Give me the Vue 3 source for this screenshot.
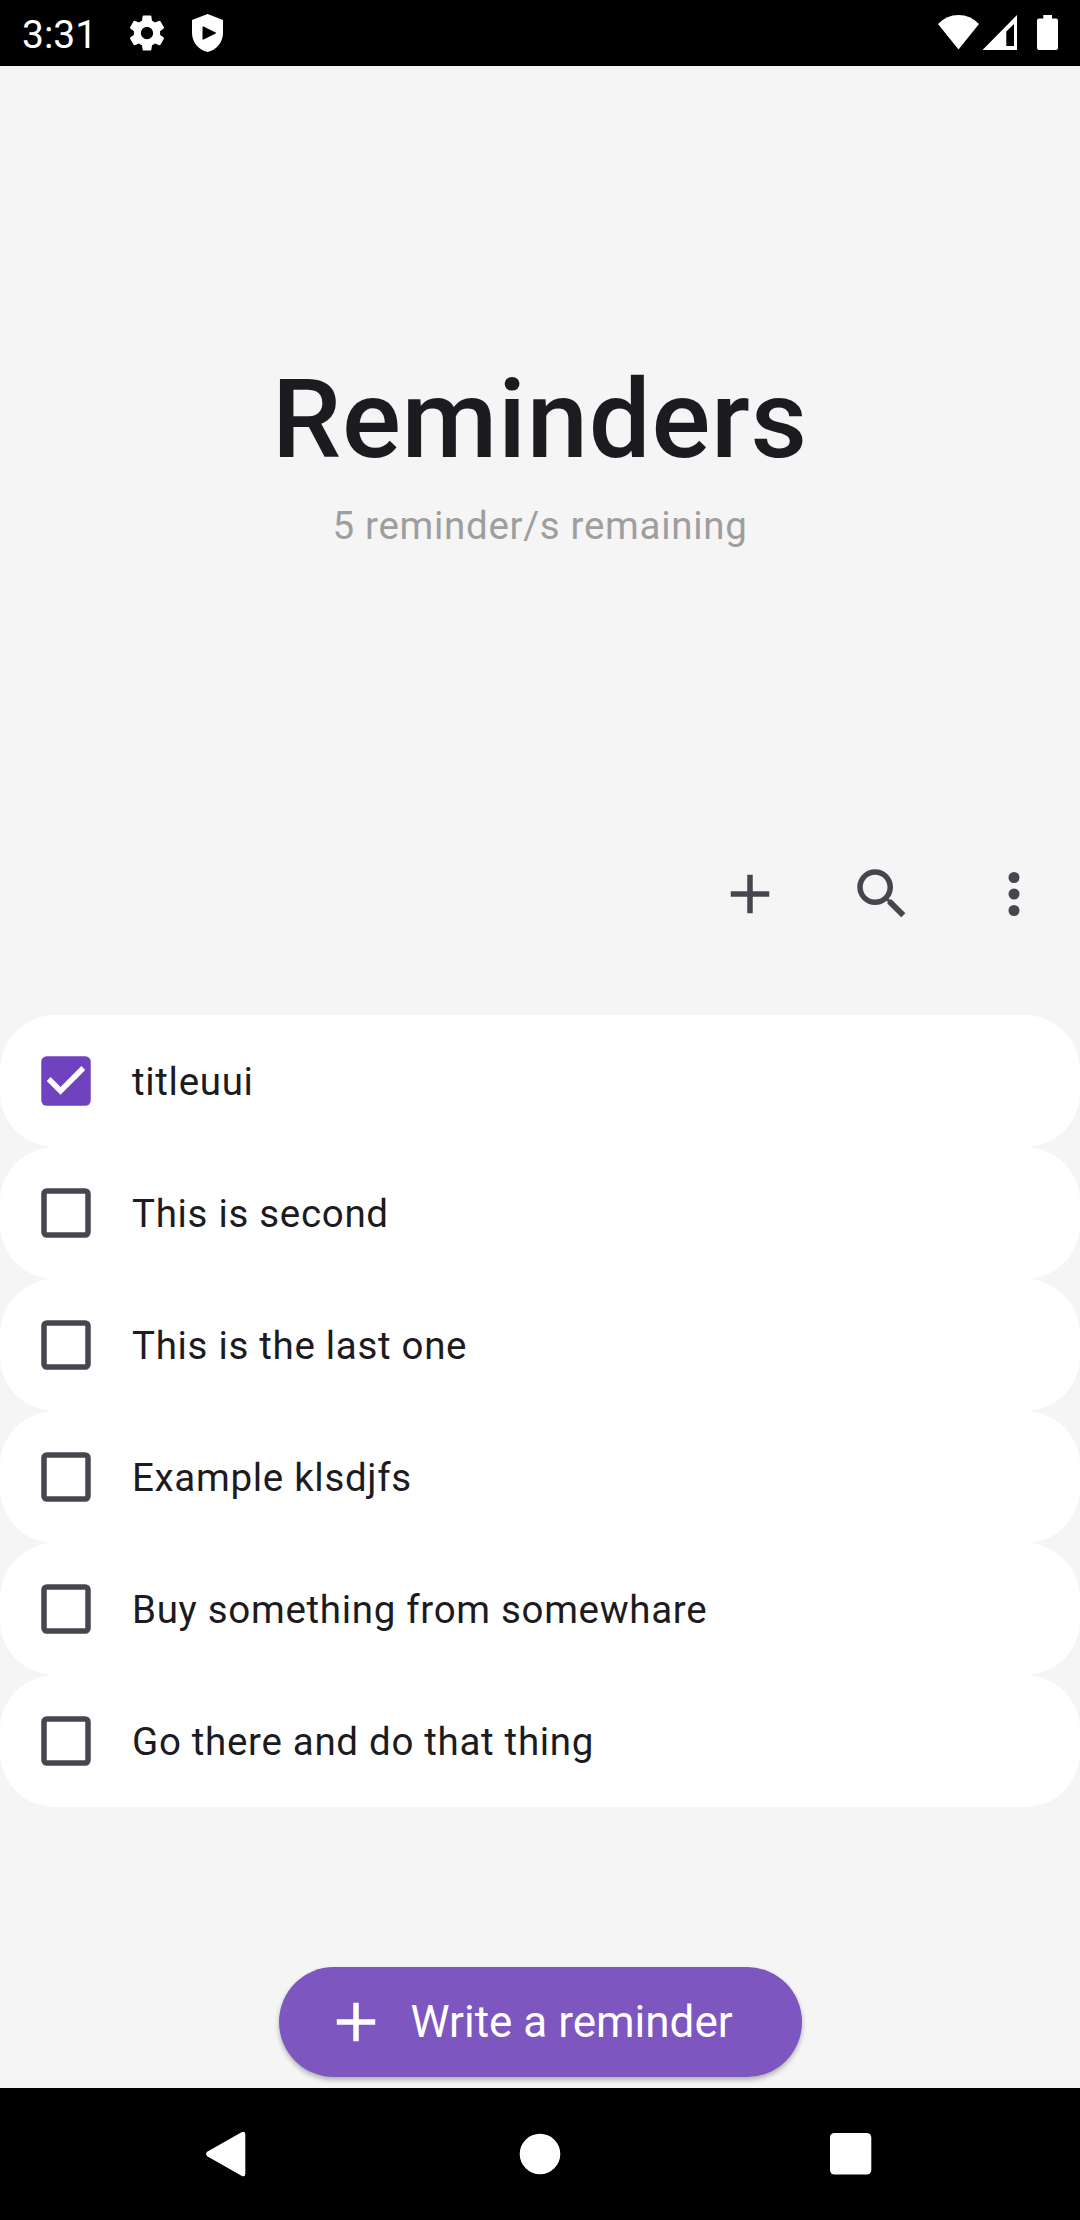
<script setup>
import { ref, computed } from 'vue'

const reminders = ref([
  { title: 'titleuui', done: true },
  { title: 'This is second', done: false },
  { title: 'This is the last one', done: false },
  { title: 'Example klsdjfs', done: false },
  { title: 'Buy something from somewhare', done: false },
  { title: 'Go there and do that thing', done: false }
])

const remaining = computed(() => reminders.value.filter((r) => !r.done).length)
</script>

<template>
  <div class="screen">
    <header class="status">
      <span class="clock">3:31</span>
      <svg class="gear" viewBox="0 0 24 24" width="42" height="42">
        <path d="M19.43 12.98c.04-.32.07-.64.07-.98s-.03-.66-.07-.98l2.11-1.65c.19-.15.24-.42.12-.64l-2-3.46c-.12-.22-.39-.3-.61-.22l-2.49 1c-.52-.4-1.08-.73-1.69-.98l-.38-2.65C14.46 2.18 14.25 2 14 2h-4c-.25 0-.46.18-.49.42l-.38 2.65c-.61.25-1.17.59-1.69.98l-2.49-1c-.23-.09-.49 0-.61.22l-2 3.46c-.13.22-.07.49.12.64l2.11 1.65c-.04.32-.07.65-.07.98s.03.66.07.98l-2.11 1.65c-.19.15-.24.42-.12.64l2 3.46c.12.22.39.3.61.22l2.49-1c.52.4 1.08.73 1.69.98l.38 2.65c.03.24.24.42.49.42h4c.25 0 .46-.18.49-.42l.38-2.65c.61-.25 1.17-.59 1.69-.98l2.49 1c.23.09.49 0 .61-.22l2-3.46c.12-.22.07-.49-.12-.64l-2.11-1.65zM12 15.5c-1.93 0-3.5-1.57-3.5-3.5s1.57-3.5 3.5-3.5 3.5 1.57 3.5 3.5-1.57 3.5-3.5 3.5z" />
      </svg>
      <svg class="shield" viewBox="0 0 32 38" width="32" height="38">
        <path fill-rule="evenodd" d="M15.6 0L31 6V19C31 28 24.5 36 15.6 38C6.500 36 0 28 0 19V6ZM11.500 12.500Q10.500 12 10.500 13V25Q10.500 26 11.500 25.500L23.700 19.600Q24.500 19 23.700 18.400Z" />
      </svg>
      <svg class="signals" viewBox="0 0 124 38" width="124" height="38">
        <path d="M0 10Q8.500 1 20.500 1T41 10L20.500 35.500Z" />
        <path fill-rule="evenodd" d="M79 1V36H44.500ZM76 10L68.300 17.500V32H76Z" />
        <path d="M105.300 1H114V4.500H118Q120 4.500 120 6.500V34Q120 36 118 36H101Q99 36 99 34V6.500Q99 4.500 101 4.500H105.300Z" />
      </svg>
    </header>

    <main class="content">
      <section class="hero">
        <h1>Reminders</h1>
        <p>{{ remaining }} reminder/s remaining</p>
      </section>

      <nav class="toolbar">
        <button class="tool" aria-label="Add">
          <svg viewBox="0 0 24 24"><path d="M19 13h-6v6h-2v-6H5v-2h6V5h2v6h6z" /></svg>
        </button>
        <button class="tool" aria-label="Search">
          <svg viewBox="0 0 24 24"><path d="M15.500 14h-.79l-.28-.27A6.471 6.471 0 0 0 16 9.500 6.500 6.500 0 1 0 9.500 16c1.610 0 3.090-.59 4.230-1.570l.27.28v.79l5 4.990L20.490 19l-4.990-5zm-6 0C7.010 14 5 11.990 5 9.500S7.010 5 9.500 5 14 7.010 14 9.500 11.990 14 9.500 14z" /></svg>
        </button>
        <button class="tool" aria-label="More options">
          <svg viewBox="0 0 24 24"><circle cx="12" cy="6" r="2" /><circle cx="12" cy="12" r="2" /><circle cx="12" cy="18" r="2" /></svg>
        </button>
      </nav>

      <ul class="list">
        <li v-for="item in reminders" :key="item.title" class="row" @click="item.done = !item.done">
          <svg class="check" viewBox="0 0 24 24">
            <template v-if="item.done">
              <rect x="3" y="3" width="18" height="18" rx="2" fill="#6f43c0" />
              <path fill="#fff" d="M10 17l-5-5 1.410-1.410L10 14.170l7.590-7.590L19 8z" />
            </template>
            <rect v-else x="4" y="4" width="16" height="16" rx="1" fill="none" stroke="#49454f" stroke-width="2" />
          </svg>
          <span class="label">{{ item.title }}</span>
        </li>
      </ul>

      <div class="action">
        <button class="fab">
          <svg viewBox="0 0 24 24" width="66" height="66"><path d="M19 13h-6v6h-2v-6H5v-2h6V5h2v6h6z" /></svg>
          <span>Write a reminder</span>
        </button>
      </div>
    </main>

    <footer class="navbar">
      <svg viewBox="0 0 40 46" width="40" height="46"><path d="M1.200 20.800L35.500 1.200Q39.300 -.5 39.300 3.500V42.500Q39.300 46.500 35.500 44.800L1.200 25.200Q-1 23 1.200 20.800Z" /></svg>
      <svg viewBox="0 0 42 42" width="42" height="42"><circle cx="21" cy="21" r="20.300" /></svg>
      <svg viewBox="0 0 42 42" width="42" height="42"><rect width="41.300" height="41.500" rx="4.500" /></svg>
    </footer>
  </div>
</template>

<style>
body {
  margin: 0;
}
</style>

<style scoped>
.screen {
  display: flex;
  flex-direction: column;
  width: 1080px;
  height: 2220px;
  overflow: hidden;
  background: #f5f5f5;
  color: #1c1b1f;
  font-family: Roboto, sans-serif;
}
svg {
  display: block;
  flex: none;
}
button {
  border: 0;
  padding: 0;
  background: none;
  font: inherit;
}
.status {
  display: flex;
  align-items: center;
  flex: none;
  box-sizing: border-box;
  height: 66px;
  padding-left: 22px;
  padding-right: 18px;
  background: #000;
  color: #fff;
  fill: #fff;
}
.clock {
  width: 104px;
  font-size: 39px;
  line-height: 46px;
  padding-top: 3px;
}
.shield {
  margin-left: 24px;
}
.signals {
  margin-left: auto;
}
.content {
  display: flex;
  flex-direction: column;
  flex: 1;
}
.hero {
  height: 762px;
  text-align: center;
}
h1 {
  margin: 0;
  padding-top: 289px;
  font-size: 110px;
  line-height: 129px;
  font-weight: 500;
  letter-spacing: 0.6875px;
}
p {
  margin: 19px 0 0;
  font-size: 38.5px;
  line-height: 46px;
  letter-spacing: 0.6875px;
  color: #9e9e9e;
}
.toolbar {
  display: flex;
  justify-content: flex-end;
  height: 132px;
  margin-bottom: 55px;
}
.hero,
.toolbar,
.list {
  flex: none;
}
.tool {
  display: flex;
  align-items: center;
  justify-content: center;
  width: 132px;
  fill: #49454f;
}
.tool svg,
.check {
  width: 66px;
  height: 66px;
}
.list {
  margin: 0;
  padding: 0;
  list-style: none;
}
.row {
  display: flex;
  align-items: center;
  gap: 33px;
  box-sizing: border-box;
  height: 132px;
  padding-left: 33px;
  border-radius: 55px;
  background: #fff;
}
.label {
  padding-top: 2px;
  font-size: 38.5px;
  line-height: 46px;
  letter-spacing: 0.6875px;
}
.action {
  display: flex;
  justify-content: center;
  margin-top: auto;
  padding-bottom: 11px;
}
.fab {
  display: flex;
  align-items: center;
  box-sizing: border-box;
  width: 523px;
  height: 110px;
  padding-left: 44px;
  border-radius: 55px;
  background: #7d56c0;
  color: #fff;
  fill: #fff;
  font-size: 44px;
  box-shadow: 0 3px 5px rgba(0, 0, 0, 0.28);
}
.fab span {
  margin-left: 22px;
}
.navbar {
  display: grid;
  grid-template-columns: 313px 290px 42px;
  align-items: center;
  flex: none;
  box-sizing: border-box;
  height: 132px;
  padding-left: 206px;
  column-gap: 0;
  background: #000;
  fill: #fff;
}
.navbar svg:last-child {
  margin-left: 21px;
}
</style>
